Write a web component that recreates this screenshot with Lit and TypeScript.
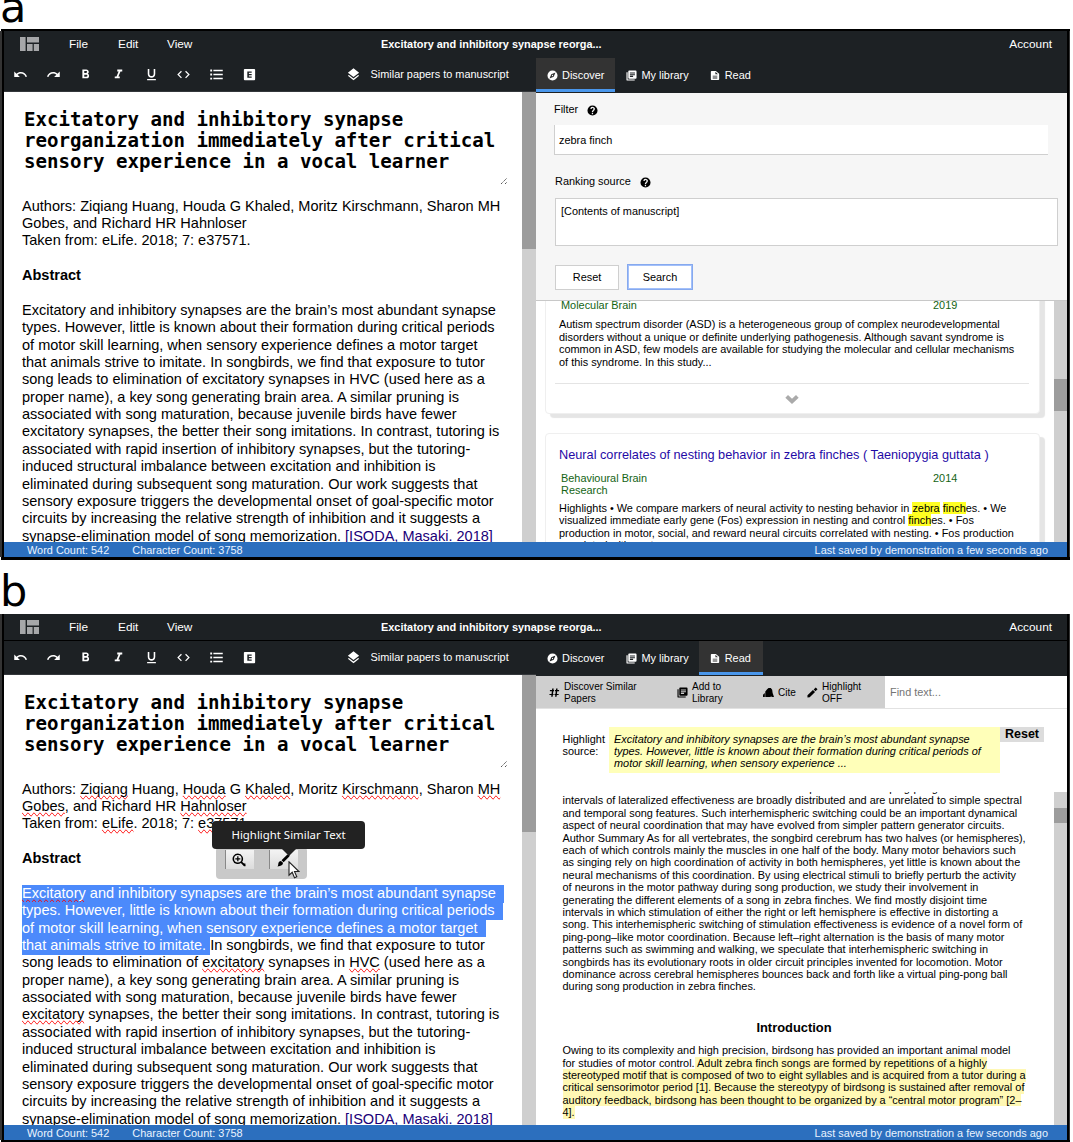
import { LitElement, html, css, svg, nothing, type TemplateResult } from "lit";
import { customElement, property } from "lit/decorators.js";
import { classMap } from "lit/directives/class-map.js";

const iconShapes = {
  logo: svg`<path d="M0 0h5.6v14H0zM7 0h12v5.6H7zM7 7h5.6v7H7zM13.8 7H19v7h-5.2z"/>`,
  undo: svg`<path d="M12.5 8c-2.65 0-5.05.99-6.9 2.6L2 7v9h9l-3.62-3.62c1.39-1.16 3.16-1.88 5.12-1.88 3.54 0 6.55 2.31 7.6 5.5l2.37-.78C21.08 11.03 17.15 8 12.5 8z"/>`,
  redo: svg`<path d="M18.4 10.6C16.55 8.99 14.15 8 11.5 8c-4.65 0-8.58 3.03-9.96 7.22L3.9 16c1.05-3.19 4.05-5.5 7.6-5.5 1.95 0 3.73.72 5.12 1.88L13 16h9V7l-3.6 3.6z"/>`,
  bold: svg`<path d="M15.6 10.79c.97-.67 1.65-1.77 1.65-2.79 0-2.26-1.75-4-4-4H7v14h7.04c2.09 0 3.71-1.7 3.71-3.79 0-1.52-.86-2.82-2.15-3.42zM10 6.5h3c.83 0 1.5.67 1.5 1.5s-.67 1.5-1.5 1.5h-3v-3zm3.5 9H10v-3h3.5c.83 0 1.5.67 1.5 1.5s-.67 1.5-1.5 1.5z"/>`,
  italic: svg`<path d="M10 4v3h2.21l-3.42 8H6v3h8v-3h-2.21l3.42-8H18V4z"/>`,
  underline: svg`<path d="M12 17c3.31 0 6-2.69 6-6V3h-2.5v8c0 1.93-1.57 3.5-3.5 3.5S8.5 12.93 8.5 11V3H6v8c0 3.31 2.69 6 6 6zm-7 2v2h14v-2H5z"/>`,
  code: svg`<path d="M9.4 16.6 4.8 12l4.6-4.6L8 6l-6 6 6 6 1.4-1.4zm5.2 0 4.6-4.6-4.6-4.6L16 6l6 6-6 6-1.4-1.4z"/>`,
  list: svg`<path d="M2 4h3v3H2zM2 10.5h3v3H2zM2 17h3v3H2zM7 4.3h15v2.4H7zM7 10.8h15v2.4H7zM7 17.3h15v2.4H7z"/>`,
  equation: svg`<path fill-rule="evenodd" d="M4.500 3h15A1.500 1.500 0 0 1 21 4.500v15a1.500 1.500 0 0 1-1.500 1.500h-15A1.500 1.500 0 0 1 3 19.500v-15A1.500 1.500 0 0 1 4.500 3zM8.500 7v10h7v-2h-4.500v-2h4.500v-2h-4.500V9h4.500V7z"/>`,
  layers: svg`<path d="m11.99 18.54-7.37-5.73L3 14.07l9 7 9-7-1.63-1.27-7.38 5.74zM12 16l7.36-5.73L21 9l-9-7-9 7 1.63 1.27L12 16z"/>`,
  compass: svg`<path fill-rule="evenodd" d="M12 1a11 11 0 1 0 0 22 11 11 0 0 0 0-22zm2.600 13.600L5.500 18.500l3.900-9.100L18.500 5.500zM12 10.600a1.400 1.400 0 1 0 0 2.800 1.400 1.400 0 0 0 0-2.800z"/>`,
  library: svg`<path fill-rule="evenodd" d="M3.500 5H1v16a2 2 0 0 0 2 2h16v-2.500H3.500zM21 1H7a2 2 0 0 0-2 2v14a2 2 0 0 0 2 2h14a2 2 0 0 0 2-2V3a2 2 0 0 0-2-2zm-1.500 6.500h-11V5.200h11zm-4 7.500h-7v-2.200h7zm4-3.700h-11V9h11z"/>`,
  page: svg`<path fill-rule="evenodd" d="M14 1H4a2 2 0 0 0-2 2v18a2 2 0 0 0 2 2h16a2 2 0 0 0 2-2V8zm3.500 18h-11v-2.200h11zm0-4.500h-11v-2.200h11zM13 9V3l6 6z"/>`,
  help: svg`<path fill-rule="evenodd" d="M12 1a11 11 0 1 0 0 22 11 11 0 0 0 0-22zm1.300 19h-2.800v-2.800h2.800zm2.900-8.600-1.200 1.200c-1.100 1.100-1.700 1.700-1.700 3.200h-2.800c0-2.200.7-3.300 1.900-4.500l1.300-1.300c.4-.4.6-.9.600-1.500a2.100 2.100 0 0 0-4.200 0H7.300a4.800 4.800 0 1 1 8.900 2.900z"/>`,
  chevron: svg`<path d="M2 8.500 6 4.500l6 5.500 6-5.500 4 4-10 9.500z"/>`,
  similar: svg`<path d="M7 3h3.200L8 21H4.800zM15.500 3h3.200l-2.200 18h-3.200zM2 6.500h9V9H2zM13 6.500h9V9h-9zM1 15h9v2.500H1zM12 15h9v2.500h-9z"/>`,
  cite: svg`<path d="M0 22v-5l4-4v9zM5 22V10l4-5 3-3h5l3 4 1 7 3 9h-5l-1-2-2 2z"/>`,
  pencil: svg`<path d="M1 23v-5L13 6.500 17.500 11 6 22.500zM14.500 5.500 19 1l4 4-4.500 4.500z"/>`,
  zoom: svg`<path fill-rule="evenodd" d="M10 1a9 9 0 1 0 5.200 16.300L21 23l2.200-2.200-5.800-5.700A9 9 0 0 0 10 1zm0 2.600a6.400 6.400 0 1 1 0 12.800 6.400 6.400 0 0 1 0-12.800z"/><path d="M8.900 5.700h2.200v3.200h3.200v2.200h-3.200v3.200H8.900v-3.200H5.700V8.900h3.200zM18 18h5v5z"/>`,
  brush: svg`<path d="M9.500 12.500 19 3.200c1-1 2.600-1 3.500 0s.9 2.400 0 3.300l-9.500 9.300zM8.500 13.500l3.500 3.400c.2 3.600-3 6.100-9.500 6.100 1.500-1.500 1.200-3 1.500-5 .4-2.500 2-4.300 4.500-4.500z"/>`,
};
type IconName = keyof typeof iconShapes;

const icon = (name: IconName, box = "0 0 24 24") =>
  html`<svg class="icon icon-${name}" viewBox=${box} fill="currentColor">${iconShapes[name]}</svg>`;

// Words between asterisks are flagged by the spelling checker.
const authorLines = [
  "Authors: *Ziqiang* Huang, *Houda* G *Khaled*, Moritz *Kirschmann*, Sharon *MH*",
  "*Gobes*, and Richard HR *Hahnloser*",
  "Taken from: *eLife*. 2018; 7: *e37571*.",
];

const abstractLines = [
  "*Excitatory* and inhibitory synapses are the brain’s most abundant synapse",
  "types. However, little is known about their formation during critical periods",
  "of motor skill learning, when sensory experience defines a motor target",
  "that animals strive to imitate.| In songbirds, we find that exposure to tutor",
  "song leads to elimination of *excitatory* synapses in *HVC* (used here as a",
  "proper name), a key song generating brain area. A similar pruning is",
  "associated with song maturation, because juvenile birds have fewer",
  "*excitatory* synapses, the better their song imitations. In contrast, tutoring is",
  "associated with rapid insertion of inhibitory synapses, but the tutoring-",
  "induced structural imbalance between excitation and inhibition is",
  "eliminated during subsequent song maturation. Our work suggests that",
  "sensory exposure triggers the developmental onset of goal-specific motor",
  "circuits by increasing the relative strength of inhibition and it suggests a",
];

const articleLines = [
  "The results indicate that the control switches hemispheres as if in a ping-pong match where",
  "intervals of lateralized effectiveness are broadly distributed and are unrelated to simple spectral",
  "and temporal song features. Such interhemispheric switching could be an important dynamical",
  "aspect of neural coordination that may have evolved from simpler pattern generator circuits.",
  "Author Summary As for all vertebrates, the songbird cerebrum has two halves (or hemispheres),",
  "each of which controls mainly the muscles in one half of the body. Many motor behaviors such",
  "as singing rely on high coordination of activity in both hemispheres, yet little is known about the",
  "neural mechanisms of this coordination. By using electrical stimuli to briefly perturb the activity",
  "of neurons in the motor pathway during song production, we study their involvement in",
  "generating the different elements of a song in zebra finches. We find mostly disjoint time",
  "intervals in which stimulation of either the right or left hemisphere is effective in distorting a",
  "song. This interhemispheric switching of stimulation effectiveness is evidence of a novel form of",
  "ping-pong–like motor coordination. Because left–right alternation is the basis of many motor",
  "patterns such as swimming and walking, we speculate that interhemispheric switching in",
  "songbirds has its evolutionary roots in older circuit principles invented for locomotion. Motor",
  "dominance across cerebral hemispheres bounces back and forth like a virtual ping-pong ball",
  "during song production in zebra finches.",
];

const tools: IconName[] = ["undo", "redo", "bold", "italic", "underline", "code", "list", "equation"];

@customElement("manuscript-workspace")
class ManuscriptWorkspace extends LitElement {
  @property() mode: "discover" | "read" = "discover";

  static styles = css`
    :host {
      display: block;
      width: 1063px;
      font: 10.91px/12.42px "Liberation Sans", Arial, sans-serif;
      color: #000;
      white-space: nowrap;
      border-left: 2px solid #000;
      border-right: 2px solid #000;
      box-shadow: -2px 0 #333, 1px 0 #333;
      margin-left: 2px;
      background: #fff;
    }
    .icon { display: block; flex: none; width: 11px; height: 11px; }
    .menu {
      box-sizing: border-box;
      height: 27px;
      display: flex;
      align-items: center;
      background: #1d2124;
      border-bottom: 1px solid #1d2124;
      color: #fff;
      font-size: 11.82px;
      padding: 0 15px 0 16px;
    }
    .read .menu { border-bottom-color: #000; }
    .icon-logo { width: 19px; height: 14px; color: #a6a7a9; margin-right: 30px; }
    .menu span { width: 49px; }
    .menu .title { font-weight: bold; font-size: 10.91px; width: auto; margin: 1px 0 0 165px; }
    .menu .account { width: auto; margin-left: auto; }
    .body { display: grid; grid-template-columns: 532px 531px; height: 484px; }
    .pane { display: flex; flex-direction: column; min-height: 0; height: 484px; }
    .toolbar {
      flex: none;
      box-sizing: border-box;
      height: 34px;
      display: flex;
      align-items: center;
      background: #1d2124;
      border-bottom: 1px solid #34373b;
      color: #fff;
      padding-left: 9px;
    }
    .toolbar .icon { width: 15px; height: 15px; margin-right: 17.7px; }
    .toolbar .icon-layers { margin-left: 71px; margin-right: 10px; }
    .scroller { flex: 1; display: flex; min-height: 0; overflow: hidden; }
    .content { flex: 1; min-width: 0; overflow: hidden; }
    .track { flex: none; width: 14px; background: #cfcfcf; }
    .track.slim { width: 13px; }
    .thumb { background: #9c9c9c; height: 157px; }
    .discover .slim .thumb { margin-top: 78px; height: 32px; }
    .read .slim .thumb { margin-top: 16px; height: 15px; }

    .editor { padding: 16.500px 0 0 18px; font-size: 14.54px; line-height: 17.38px; position: relative; }
    .headline {
      font: bold 19.1px/21.4px "DejaVu Sans Mono", monospace;
      padding: 0 0 12px 2px;
      width: 484px;
      height: 64px;
      margin-bottom: 13px;
      display: grid;
      align-content: start;
      position: relative;
    }
    .grip { position: absolute; right: 0; bottom: 0; width: 8px; height: 8px; }
    .line { height: 17.38px; }
    .strong { font-weight: bold; }
    .citation { color: #1a0078; }
    .read .misspelled { text-decoration-line: spelling-error; }
    .read .selected {
      display: inline-block;
      height: 17.9px;
      background: #4c8afb;
      color: #fff;
      padding-right: 8px;
    }
    .read .selected.last { padding-right: 4px; margin-right: -4px; }

    .popup {
      position: absolute;
      left: 212px;
      top: 172px;
      width: 91px;
      height: 32px;
      box-sizing: border-box;
      padding: 3px 9px 0;
      background: #c9c9c9;
      border-radius: 4px;
      display: flex;
      justify-content: space-between;
    }
    .popup button {
      margin: 0;
      padding: 0;
      width: 29px;
      height: 19px;
      border: 0;
      border-left: 1px solid #888;
      background: linear-gradient(#f3f3f3, #dcdcdc);
      display: grid;
      place-items: center;
      color: #000;
    }
    .popup .icon { width: 14px; height: 14px; margin-left: -2px; }
    .tooltip {
      position: absolute;
      left: 208px;
      top: 146px;
      width: 153px;
      height: 28px;
      border-radius: 4px;
      background: #222;
      color: #fff;
      font: 11.4px/28px "Noto Sans", sans-serif;
      text-align: center;
    }
    .tooltip::after {
      content: "";
      position: absolute;
      left: 70px;
      top: 28px;
      border: 7px solid transparent;
      border-top-color: #222;
      border-bottom: 0;
    }
    .cursor { position: absolute; left: 284px; top: 186px; width: 12px; height: 18px; }

    .tabs { flex: none; height: 35px; display: flex; background: #1d2124; color: #fff; }
    .tab {
      box-sizing: border-box;
      height: 34px;
      display: flex;
      align-items: center;
      gap: 4px;
      padding: 3px 10px 0 11px;
      border-bottom: 3px solid transparent;
    }
    .tab.active { background: #333; border-bottom-color: #4a97ec; }
    .tab .icon-page { width: 10px; margin-right: 1px; }
    .tab:first-child { padding-right: 11px; }
    .tab:last-child { padding-right: 12px; }

    .search {
      flex: none;
      box-sizing: border-box;
      height: 208px;
      background: #f6f6f6;
      border-bottom: 1px solid #c8c8c8;
      padding: 10px 9px 0 19px;
    }
    .label { display: flex; align-items: center; height: 13px; }
    .label span { margin-left: -1px; }
    .icon-help { width: 11px; height: 11px; margin: 1px 0 0 9px; }
    .field {
      box-sizing: border-box;
      background: #fff;
      border: 1px solid #cfcfcf;
      margin: 10px 0 18px;
      height: 48px;
      padding: 6px 5px 0;
    }
    .field.filter {
      width: 494px;
      height: 30px;
      border-width: 0 0 1px 1px;
      margin: 9px 0 20px -1px;
      padding: 9px 4px 0;
    }
    .buttons { display: flex; gap: 8px; }
    .button {
      box-sizing: border-box;
      width: 64px;
      height: 25px;
      margin-top: 1px;
      background: #fff;
      border: 1px solid #cfcfcf;
      text-align: center;
      line-height: 23px;
    }
    .button.focus {
      width: 66px;
      height: 26px;
      margin-top: 0;
      border-color: #86a9ee;
      box-shadow: inset 0 0 0 1px #a3c0fa;
      line-height: 25px;
    }

    .results { padding: 0 14px 0 9px; }
    .card {
      box-sizing: border-box;
      border: 1px solid #efefef;
      border-radius: 4px;
      background: #fff;
      box-shadow: 5px 4px 1px #e5e5e5;
      padding: 11px 10px 0 13px;
      height: 154px;
    }
    .card.scrolled { margin: -41px 0 19px; }
    .card-title { font-size: 12.72px; line-height: 20px; height: 20px; color: #1f0aa6; }
    .meta { display: grid; grid-template-columns: 372px 1fr; margin: 6.500px 0 0 2px; color: #146414; }
    .summary { margin-top: 5.500px; }
    .scrolled .summary { margin-top: 7.500px; }
    mark { background: #ff2; color: inherit; }
    .more {
      border-top: 1px solid #e4e4e4;
      margin: 15px 0 0 -4px;
      display: grid;
      justify-content: center;
      padding-top: 8px;
    }
    .icon-chevron { width: 16px; height: 16px; color: #aaa; }

    .actions {
      flex: none;
      height: 32px;
      display: flex;
      border-bottom: 1px solid #e2e2e2;
      font-size: 10.05px;
      line-height: 12px;
    }
    .group { width: 349px; background: #cfcfcf; display: flex; align-items: center; }
    .action { display: flex; align-items: center; gap: 4px; box-sizing: border-box; padding-top: 1px; }
    .find { color: #757575; font-size: 10.91px; line-height: 32px; padding-left: 5px; }
    .source { flex: none; display: flex; height: 65px; margin-top: 18px; align-items: flex-start; }
    .source-label { width: 46.500px; margin: 5.500px 0 0 26.500px; }
    .source-text {
      box-sizing: border-box;
      width: 391px;
      height: 46px;
      padding: 5.500px 5px 0;
      background: #ffffb9;
      font-style: italic;
    }
    .reset {
      width: 44px;
      height: 15px;
      background: #dcdcdc;
      font-weight: bold;
      font-size: 12.500px;
      line-height: 15px;
      text-align: center;
    }
    .article { padding-left: 26.500px; }
    .paper { margin-top: -10.100px; }
    .paper div { height: 12.42px; }
    .paper h2 {
      margin: 27.300px 0 9.300px;
      width: 463px;
      text-align: center;
      font-size: 12.9px;
      line-height: 15px;
    }
    .paper mark { background: #fff8b4; padding: 0.300px 0; }

    .status {
      height: 15px;
      line-height: 16px;
      background: #2c6fbe;
      color: #eaf3ff;
      display: flex;
      padding: 0 19px 0 23px;
    }
    .status span { margin-right: 23px; }
    .status .saved { margin: 0 0 0 auto; }
  `;

  private words(text: string) {
    return text
      .split("*")
      .map((part, i) => (i % 2 ? html`<span class="misspelled">${part}</span>` : part));
  }

  private abstractLine(text: string, index: number): TemplateResult {
    if (index > 3) return html`<div class="line">${this.words(text)}</div>`;
    const [picked, rest] = text.split("|");
    const last = rest !== undefined;
    return html`<div class="line"><span class=${classMap({ selected: true, last })}>${this.words(picked)}</span>${rest ?? nothing}</div>`;
  }

  private editor() {
    return html`
      <div class="pane">
        <div class="toolbar">
          ${tools.map((t) => icon(t))}${icon("layers")}<span>Similar papers to manuscript</span>
        </div>
        <div class="scroller">
          <div class="content editor">
            <div class="headline">
              <span>Excitatory and inhibitory synapse</span>
              <span>reorganization immediately after critical</span>
              <span>sensory experience in a vocal learner</span>
              <svg class="grip" viewBox="0 0 8 8" stroke="#555" stroke-width="1" stroke-dasharray="1.400 .6"><path d="M1 7 7 1M5 7l2-2" /></svg>
            </div>
            ${authorLines.map((l) => html`<div class="line">${this.words(l)}</div>`)}
            <div class="line"></div>
            <div class="line strong">Abstract</div>
            <div class="line"></div>
            ${abstractLines.map((l, i) => this.abstractLine(l, i))}
            <div class="line">synapse-elimination model of song memorization. <span class="citation">[ISODA, Masaki. 2018]</span></div>
            ${this.mode === "read" ? this.selectionPopup() : nothing}
          </div>
          <div class="track"><div class="thumb"></div></div>
        </div>
      </div>
    `;
  }

  private selectionPopup() {
    return html`
      <div class="popup"><button>${icon("zoom")}</button><button>${icon("brush")}</button></div>
      <div class="tooltip">Highlight Similar Text</div>
      <svg class="cursor" viewBox="0 0 12 18"><path d="M1 .8v13.400l3.200-2.900 2.300 5.500 2.300-1-2.300-5.300h4.400z" fill="#fff" stroke="#222" stroke-width="1.100" /></svg>
    `;
  }

  private tabs() {
    const discover = this.mode === "discover";
    return html`
      <div class="tabs">
        <div class=${classMap({ tab: true, active: discover })}>${icon("compass")}<span>Discover</span></div>
        <div class="tab">${icon("library")}<span>My library</span></div>
        <div class=${classMap({ tab: true, active: !discover })}>${icon("page")}<span>Read</span></div>
      </div>
    `;
  }

  private discoverPane() {
    return html`
      <div class="search">
        <div class="label"><span>Filter</span>${icon("help")}</div>
        <div class="field filter">zebra finch</div>
        <div class="label">Ranking source${icon("help")}</div>
        <div class="field">[Contents of manuscript]</div>
        <div class="buttons"><div class="button">Reset</div><div class="button focus">Search</div></div>
      </div>
      <div class="scroller">
        <div class="content results">
          <div class="card scrolled">
            <div class="card-title"></div>
            <div class="meta"><span>Molecular Brain</span><span>2019</span></div>
            <div class="summary">
              Autism spectrum disorder (ASD) is a heterogeneous group of complex neurodevelopmental<br />
              disorders without a unique or definite underlying pathogenesis. Although savant syndrome is<br />
              common in ASD, few models are available for studying the molecular and cellular mechanisms<br />
              of this syndrome. In this study...
            </div>
            <div class="more">${icon("chevron")}</div>
          </div>
          <div class="card">
            <div class="card-title">Neural correlates of nesting behavior in zebra finches ( Taeniopygia guttata )</div>
            <div class="meta"><span>Behavioural Brain<br />Research</span><span>2014</span></div>
            <div class="summary">
              Highlights • We compare markers of neural activity to nesting behavior in <mark>zebra</mark> <mark>finch</mark>es. • We<br />
              visualized immediate early gene (Fos) expression in nesting and control <mark>finch</mark>es. • Fos<br />
              production in motor, social, and reward neural circuits correlated with nesting. • Fos production<br />
              correlated with nest
            </div>
          </div>
        </div>
        <div class="track slim"><div class="thumb"></div></div>
      </div>
    `;
  }

  private readPane() {
    return html`
      <div class="actions">
        <div class="group">
          <div class="action" style="width:127px;padding-left:13px">${icon("similar")}<span>Discover Similar<br />Papers</span></div>
          <div class="action" style="width:86px;padding-left:14px">${icon("library")}<span>Add to<br />Library</span></div>
          <div class="action" style="width:44px;padding-left:14px">${icon("cite")}<span>Cite</span></div>
          <div class="action" style="padding-left:14px">${icon("pencil")}<span>Highlight<br />OFF</span></div>
        </div>
        <div class="find">Find text...</div>
      </div>
      <div class="source">
        <div class="source-label">Highlight<br />source:</div>
        <div class="source-text">
          Excitatory and inhibitory synapses are the brain’s most abundant synapse<br />
          types. However, little is known about their formation during critical periods of<br />
          motor skill learning, when sensory experience ...
        </div>
        <div class="reset">Reset</div>
      </div>
      <div class="scroller">
        <div class="content article">
          <div class="paper">
            ${articleLines.map((l) => html`<div>${l}</div>`)}
            <h2>Introduction</h2>
            <div>Owing to its complexity and high precision, birdsong has provided an important animal model</div>
            <div>for studies of motor control.<mark> Adult zebra finch songs are formed by repetitions of a highly</mark></div>
            <div><mark>stereotyped motif that is composed of two to eight syllables and is acquired from a tutor during a</mark></div>
            <div><mark>critical sensorimotor period [1]. Because the stereotypy of birdsong is sustained after removal of</mark></div>
            <div><mark>auditory feedback, birdsong has been thought to be organized by a “central motor program” [2–</mark></div>
            <div><mark>4].</mark></div>
          </div>
        </div>
        <div class="track slim"><div class="thumb"></div></div>
      </div>
    `;
  }

  render() {
    return html`
      <div class=${this.mode}>
        <div class="menu">
          ${icon("logo", "0 0 19 14")}<span>File</span><span>Edit</span><span>View</span>
          <span class="title">Excitatory and inhibitory synapse reorga...</span>
          <span class="account">Account</span>
        </div>
        <div class="body">
          ${this.editor()}
          <div class="pane">
            ${this.tabs()}${this.mode === "discover" ? this.discoverPane() : this.readPane()}
          </div>
        </div>
        <div class="status">
          <span>Word Count: 542</span><span>Character Count: 3758</span>
          <span class="saved">Last saved by demonstration a few seconds ago</span>
        </div>
      </div>
    `;
  }
}

@customElement("app-root")
class AppRoot extends LitElement {
  static styles = css`
    :host { display: block; width: 1073px; height: 1142px; overflow: hidden; background: #fff; }
    .caption { font: 43px/50px "DejaVu Sans", sans-serif; color: #000; height: 29px; overflow: hidden; }
    .caption span { display: block; margin-top: -18px; }
    .caption.second { height: 54px; }
    .caption.second span { margin-top: 6px; }
    .bar { width: 1069px; height: 2px; margin-left: 1px; background: #000; }
    .bar.thick { height: 3px; }
  `;

  render() {
    return html`
      <div class="caption"><span>a</span></div>
      <div class="bar"></div>
      <manuscript-workspace mode="discover"></manuscript-workspace>
      <div class="bar thick"></div>
      <div class="caption second"><span>b</span></div>
      <manuscript-workspace mode="read"></manuscript-workspace>
      <div class="bar"></div>
    `;
  }
}
